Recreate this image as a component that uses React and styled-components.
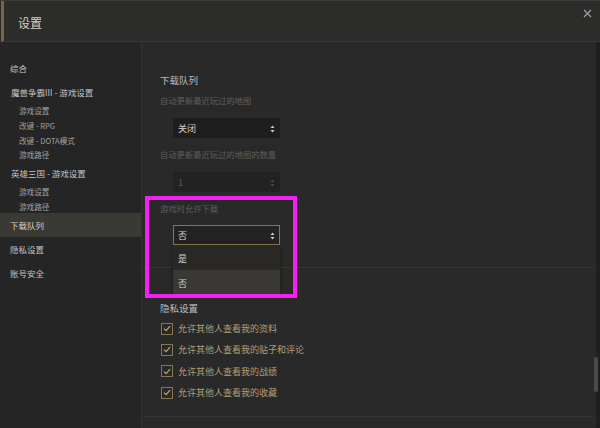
import React from "react";
import styled, { createGlobalStyle } from "styled-components";

const Global = createGlobalStyle`
  html, body { margin: 0; padding: 0; background: #282828; }
  body { font-family: "Noto Sans CJK SC", "Noto Sans", sans-serif; }
  * { box-sizing: border-box; }
`;

const Window = styled.div`
  position: relative;
  width: 600px;
  height: 428px;
  overflow: hidden;
  background: #282828;
  border-top: 1px solid #3a3a38;
  display: flex;
  flex-direction: column;
`;

const TitleBar = styled.div`
  height: 41px;
  flex: none;
  margin-left: 1px;
  border-left: 3px solid #7a6640;
  border-bottom: 1px solid #363634;
  background: #2c2c2a;
  display: flex;
  align-items: center;
  justify-content: space-between;
  padding: 0 8px 0 14px;
`;

const Title = styled.div`
  font-size: 12px;
  color: #d6d1bf;
  line-height: 16px;
  padding-top: 3px;
`;

const Close = styled.div`
  align-self: flex-start;
  margin-top: 8px;
  width: 9px;
  height: 9px;
  display: flex;
`;

const Body = styled.div`
  flex: 1;
  display: flex;
  min-height: 0;
`;

const Sidebar = styled.div`
  width: 142px;
  flex: none;
  background: #252525;
  border-right: 1px solid #323232;
  padding-top: 14px;
  display: flex;
  flex-direction: column;
`;

const NavItem = styled.div`
  height: 24px;
  line-height: 24px;
  padding-left: 10px;
  font-size: 8.5px;
  color: ${(p) => (p.$active ? "#d4d2cc" : "#c4c4c4")};
  background: ${(p) => (p.$active ? "#3a3934" : "transparent")};
`;

const NavGroup = styled.div`
  height: 22px;
  padding-top: 3px;
  line-height: 19px;
  padding-left: 11px;
  font-size: 8.5px;
  color: #c4c4c4;
`;

const NavSub = styled.div`
  height: 14.75px;
  padding-top: 4px;
  line-height: 10.75px;
  padding-left: 19px;
  font-size: 7.6px;
  color: #a2a2a2;
`;

const Main = styled.div`
  flex: 1;
  background: #292929;
  display: flex;
  min-width: 0;
`;

const Content = styled.div`
  flex: 1;
  padding-right: 2px;
  display: flex;
  flex-direction: column;
`;

const Section = styled.div`
  padding: ${(p) => p.$pad};
  border-bottom: 1px solid #353535;
  display: flex;
  flex-direction: column;
`;

const Heading = styled.div`
  padding-left: 18px;
  height: 14px;
  padding-top: 2px;
  font-size: 9.5px;
  line-height: 12px;
  color: #bdbdbd;
`;

const Desc = styled.div`
  padding-left: 18px;
  margin-top: ${(p) => p.$mt}px;
  font-size: 8.3px;
  line-height: 12px;
  color: #5f5f5f;
`;

const SelectWrap = styled.div`
  position: relative;
  margin: ${(p) => p.$mt}px 0 0 31px;
  width: 107px;
`;

const SelectBox = styled.div`
  height: 20px;
  width: 107px;
  background: ${(p) => (p.$disabled ? "#222222" : p.$open ? "#242321" : "#1e1e1e")};
  border: 1px solid ${(p) => (p.$open ? "#8a7553" : "transparent")};
  display: flex;
  align-items: center;
  justify-content: space-between;
  padding: 1px 4px 0 4px;
  font-size: 9px;
  color: ${(p) => (p.$disabled ? "#575757" : "#d2d2d2")};
`;

const Menu = styled.div`
  position: absolute;
  top: 20px;
  left: 0;
  width: 107px;
  display: flex;
  flex-direction: column;
  z-index: 2;
  box-shadow: 0 2px 4px rgba(0, 0, 0, 0.4);
`;

const Option = styled.div`
  height: 24.5px;
  padding-top: 3px;
  line-height: 21.5px;
  padding-left: 5px;
  font-size: 9px;
  color: #cfcfcf;
  background: ${(p) => (p.$hover ? "#3a3834" : "#2a2825")};
`;

const CheckList = styled.div`
  margin-top: 4px;
  display: flex;
  flex-direction: column;
`;

const CheckRow = styled.div`
  height: 21.3px;
  display: flex;
  align-items: center;
  padding-left: 19px;
  gap: 5px;
`;

const Box = styled.div`
  width: 12px;
  height: 12px;
  border: 1px solid #8a7553;
  display: flex;
  align-items: center;
  justify-content: center;
`;

const CheckLabel = styled.span`
  font-size: 9px;
  color: #b39d73;
  line-height: 12px;
  padding-top: 1px;
`;

const Track = styled.div`
  width: 4px;
  flex: none;
  background: #1f1f1f;
  position: relative;
`;

const Thumb = styled.div`
  position: absolute;
  left: -2px;
  top: 315px;
  width: 4px;
  height: 35px;
  border-radius: 2px;
  background: #4a4a4a;
`;

const Highlight = styled.div`
  position: absolute;
  left: 145px;
  top: 195px;
  width: 152px;
  height: 102px;
  border: 4px solid #f41ff4;
  pointer-events: none;
  z-index: 5;
`;

const Arrows = ({ color }) => (
  <svg width="5" height="8" viewBox="0 0 5 8">
    <path d="M2.5 0.5 L4.5 3 L0.5 3 Z" fill={color} />
    <path d="M2.5 7.5 L4.5 5 L0.5 5 Z" fill={color} />
  </svg>
);

const Check = () => (
  <svg width="8" height="7" viewBox="0 0 8 7">
    <path d="M1 3.6 L3.1 5.6 L7 1.2" fill="none" stroke="#bfa77a" strokeWidth="1.2" />
  </svg>
);

const checks = [
  "允许其他人查看我的资料",
  "允许其他人查看我的贴子和评论",
  "允许其他人查看我的战绩",
  "允许其他人查看我的收藏",
];

export default function App() {
  return (
    <>
      <Global />
      <Window>
        <TitleBar>
          <Title>设置</Title>
          <Close>
            <svg width="9" height="9" viewBox="0 0 9 9">
              <path d="M1 1 L8 8 M8 1 L1 8" stroke="#9a9a9a" strokeWidth="1.4" />
            </svg>
          </Close>
        </TitleBar>
        <Body>
          <Sidebar>
            <NavItem>综合</NavItem>
            <NavGroup>魔兽争霸III - 游戏设置</NavGroup>
            <NavSub>游戏设置</NavSub>
            <NavSub>改键 - RPG</NavSub>
            <NavSub>改键 - DOTA模式</NavSub>
            <NavSub>游戏路径</NavSub>
            <NavGroup>英雄三国 - 游戏设置</NavGroup>
            <NavSub>游戏设置</NavSub>
            <NavSub>游戏路径</NavSub>
            <NavItem $active>下载队列</NavItem>
            <NavItem>隐私设置</NavItem>
            <NavItem>账号安全</NavItem>
          </Sidebar>
          <Main>
            <Content>
              <Section $pad="30px 0 22px 0">
                <Heading>下载队列</Heading>
                <Desc $mt={8}>自动更新最近玩过的地图</Desc>
                <SelectWrap $mt={12}>
                  <SelectBox>
                    <span>关闭</span>
                    <Arrows color="#d0d0d0" />
                  </SelectBox>
                </SelectWrap>
                <Desc $mt={10}>自动更新最近玩过的地图的数量</Desc>
                <SelectWrap $mt={12}>
                  <SelectBox $disabled>
                    <span>1</span>
                    <Arrows color="#4a4a4a" />
                  </SelectBox>
                </SelectWrap>
                <Desc $mt={10}>游戏时允许下载</Desc>
                <SelectWrap $mt={11}>
                  <SelectBox $open>
                    <span>否</span>
                    <Arrows color="#d0d0d0" />
                  </SelectBox>
                  <Menu>
                    <Option>是</Option>
                    <Option $hover>否</Option>
                  </Menu>
                </SelectWrap>
              </Section>
              <Section $pad="32px 0 13px 0">
                <Heading>隐私设置</Heading>
                <CheckList>
                  {checks.map((c) => (
                    <CheckRow key={c}>
                      <Box>
                        <Check />
                      </Box>
                      <CheckLabel>{c}</CheckLabel>
                    </CheckRow>
                  ))}
                </CheckList>
              </Section>
            </Content>
            <Track>
              <Thumb />
            </Track>
          </Main>
        </Body>
        <Highlight />
      </Window>
    </>
  );
}
